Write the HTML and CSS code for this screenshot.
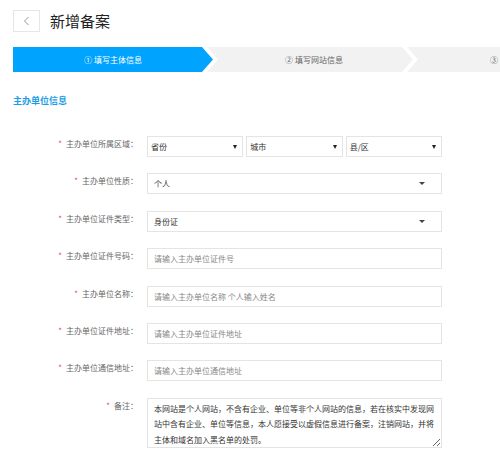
FILE: index.html
```html
<!DOCTYPE html>
<html lang="zh-CN">
<head>
    <meta charset="UTF-8">
    <meta name="viewport" content="width=device-width, initial-scale=1.0">
    <title>新增备案</title>
    <link rel="stylesheet" href="styles.css">
</head>
<body>
    <div class="page">
        <div class="header">
            <div class="back-btn">
                <svg width="7" height="10" viewBox="0 0 7 10">
                    <polyline points="5.5,1 1.5,5 5.5,9" fill="none" stroke="#999" stroke-width="1"/>
                </svg>
            </div>
            <div class="title">新增备案</div>
        </div>

        <div class="steps">
            <div class="step step-first active">① 填写主体信息</div>
            <div class="step">② 填写网站信息</div>
            <div class="step step-last">③</div>
        </div>

        <div class="section-title">主办单位信息</div>

        <form class="form">
            <div class="form-row">
                <label class="form-label"><span class="req">*</span>主办单位所属区域：</label>
                <div class="form-control select-group">
                    <div class="select small">省份</div>
                    <div class="select small">城市</div>
                    <div class="select small">县/区</div>
                </div>
            </div>
            <div class="form-row">
                <label class="form-label"><span class="req">*</span>主办单位性质：</label>
                <div class="form-control select big">个人</div>
            </div>
            <div class="form-row">
                <label class="form-label"><span class="req">*</span>主办单位证件类型：</label>
                <div class="form-control select big">身份证</div>
            </div>
            <div class="form-row">
                <label class="form-label"><span class="req">*</span>主办单位证件号码：</label>
                <input class="form-control input" type="text" placeholder="请输入主办单位证件号">
            </div>
            <div class="form-row">
                <label class="form-label"><span class="req">*</span>主办单位名称：</label>
                <input class="form-control input" type="text" placeholder="请输入主办单位名称 个人输入姓名">
            </div>
            <div class="form-row">
                <label class="form-label"><span class="req">*</span>主办单位证件地址：</label>
                <input class="form-control input" type="text" placeholder="请输入主办单位证件地址">
            </div>
            <div class="form-row">
                <label class="form-label"><span class="req">*</span>主办单位通信地址：</label>
                <input class="form-control input" type="text" placeholder="请输入主办单位通信地址">
            </div>
            <div class="form-row">
                <label class="form-label"><span class="req">*</span>备注：</label>
                <textarea class="form-control textarea">本网站是个人网站，不含有企业、单位等非个人网站的信息，若在核实中发现网站中含有企业、单位等信息，本人愿接受以虚假信息进行备案，注销网站，并将主体和域名加入黑名单的处罚。</textarea>
            </div>
        </form>
    </div>
</body>
</html>
```

FILE: styles.css
```css
body {
    margin: 0;
    padding: 0;
    font-family: "Noto Sans CJK SC", "Noto Sans", sans-serif;
    color: #333;
    background: #fff;
    overflow: hidden;
}

.page {
    padding: 10px 0 0 13px;
}

/* header */
.header {
    display: flex;
    align-items: center;
    gap: 10px;
    height: 22px;
}
.back-btn {
    box-sizing: border-box;
    width: 27px;
    height: 22px;
    border: 1px solid #e6e6e6;
    display: flex;
    align-items: center;
    justify-content: center;
}
.title {
    font-size: 15px;
    line-height: 22px;
    color: #222;
}

/* steps */
.steps {
    display: flex;
    margin-top: 15px;
    height: 25px;
    width: 620px;
}
.step {
    width: 206px;
    height: 25px;
    margin-left: -6px;
    background: #f2f2f2;
    color: #666;
    font-size: 8px;
    line-height: 25px;
    text-align: center;
    padding-left: 8px;
    box-sizing: border-box;
    clip-path: polygon(0 0, calc(100% - 11px) 0, 100% 50%, calc(100% - 11px) 100%, 0 100%, 11px 50%);
}
.step-first {
    width: 200px;
    margin-left: 0;
    padding-left: 0;
    clip-path: polygon(0 0, calc(100% - 11px) 0, 100% 50%, calc(100% - 11px) 100%, 0 100%);
}
.step-last {
    text-align: left;
    padding-left: 83px;
}
.step.active {
    background: #00a4ff;
    color: #fff;
}

/* section */
.section-title {
    margin-top: 23px;
    font-size: 9px;
    line-height: 12px;
    font-weight: bold;
    color: #1a9de6;
}

/* form */
.form {
    margin-top: 29px;
}
.form-row {
    display: flex;
    align-items: flex-start;
    margin-bottom: 16.4px;
}
.form-label {
    width: 125px;
    margin-right: 9px;
    text-align: right;
    font-size: 8px;
    line-height: 16px;
    color: #666;
    white-space: nowrap;
}
.req {
    color: #f04848;
    margin-right: 4px;
}
.form-control {
    box-sizing: border-box;
    width: 295px;
    height: 21px;
    font-family: "Noto Sans CJK SC", "Noto Sans", sans-serif;
    font-size: 8px;
    color: #333;
}
.input,
.select.big,
.select.small,
.textarea {
    border: 1px solid #e4e4e4;
    background: #fff;
}
.input {
    padding: 0 6px;
    outline: none;
}
.input::placeholder {
    color: #888;
}

.select-group {
    display: flex;
    gap: 3px;
}
.select {
    position: relative;
    box-sizing: border-box;
    line-height: 19px;
}
.select.small {
    flex: 1;
    height: 21px;
    padding-left: 3px;
    font-size: 8px;
}
.select.small::after {
    content: "";
    position: absolute;
    right: 5px;
    top: 8px;
    border-left: 2px solid transparent;
    border-right: 2px solid transparent;
    border-top: 4px solid #222;
}
.select.big {
    padding-left: 6px;
}
.select.big::after {
    content: "";
    position: absolute;
    right: 16px;
    top: 8px;
    border-left: 3.5px solid transparent;
    border-right: 3.5px solid transparent;
    border-top: 3.5px solid #444;
}

.textarea {
    height: 50px;
    padding: 2px 6px 0 6px;
    line-height: 15.5px;
    resize: vertical;
    overflow: hidden;
    outline: none;
}
```
